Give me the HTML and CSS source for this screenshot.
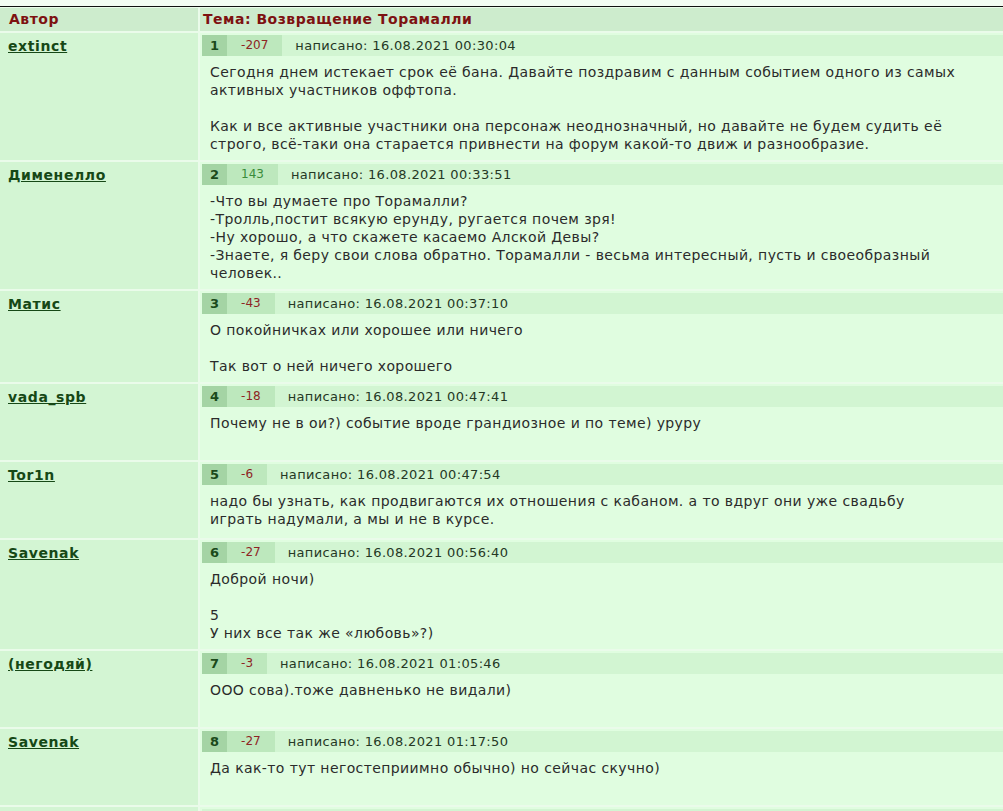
FILE: index.html
```html
<!DOCTYPE html>
<html lang="ru">
<head>
    <meta charset="UTF-8">
    <title>Возвращение Торамалли</title>
    <link rel="stylesheet" href="styles.css">
</head>
<body>
    <div class="forum">
        <div class="topic">
            <div class="cab cab-autor">Автор</div>
            <div class="cab">Тема: Возвращение Торамалли</div>

            <div class="autor"><a href="#">extinct</a></div>
            <div class="post">
                <div class="info"><span class="num">1</span><span class="voto neg">-207</span><span class="data">написано: 16.08.2021 00:30:04</span></div>
                <div class="texto">Сегодня днем истекает срок её бана. Давайте поздравим с данным событием одного из самых активных участников оффтопа.<br><br>Как и все активные участники она персонаж неоднозначный, но давайте не будем судить её строго, всё-таки она старается привнести на форум какой-то движ и разнообразие.</div>
            </div>

            <div class="autor"><a href="#">Дименелло</a></div>
            <div class="post">
                <div class="info"><span class="num">2</span><span class="voto pos">143</span><span class="data">написано: 16.08.2021 00:33:51</span></div>
                <div class="texto">-Что вы думаете про Торамалли?<br>-Тролль,постит всякую ерунду, ругается почем зря!<br>-Ну хорошо, а что скажете касаемо Алской Девы?<br>-Знаете, я беру свои слова обратно. Торамалли - весьма интересный, пусть и своеобразный человек..</div>
            </div>

            <div class="autor"><a href="#">Матис</a></div>
            <div class="post">
                <div class="info"><span class="num">3</span><span class="voto neg">-43</span><span class="data">написано: 16.08.2021 00:37:10</span></div>
                <div class="texto">О покойничках или хорошее или ничего<br><br>Так вот о ней ничего хорошего</div>
            </div>

            <div class="autor"><a href="#">vada_spb</a></div>
            <div class="post">
                <div class="info"><span class="num">4</span><span class="voto neg">-18</span><span class="data">написано: 16.08.2021 00:47:41</span></div>
                <div class="texto">Почему не в ои?) событие вроде грандиозное и по теме) уруру</div>
            </div>

            <div class="autor"><a href="#">Tor1n</a></div>
            <div class="post">
                <div class="info"><span class="num">5</span><span class="voto neg">-6</span><span class="data">написано: 16.08.2021 00:47:54</span></div>
                <div class="texto">надо бы узнать, как продвигаются их отношения с кабаном. а то вдруг они уже свадьбу играть надумали, а мы и не в курсе.</div>
            </div>

            <div class="autor"><a href="#">Savenak</a></div>
            <div class="post">
                <div class="info"><span class="num">6</span><span class="voto neg">-27</span><span class="data">написано: 16.08.2021 00:56:40</span></div>
                <div class="texto">Доброй ночи)<br><br>5<br>У них все так же «любовь»?)</div>
            </div>

            <div class="autor"><a href="#">(негодяй)</a></div>
            <div class="post">
                <div class="info"><span class="num">7</span><span class="voto neg">-3</span><span class="data">написано: 16.08.2021 01:05:46</span></div>
                <div class="texto">ООО сова).тоже давненько не видали)</div>
            </div>

            <div class="autor"><a href="#">Savenak</a></div>
            <div class="post">
                <div class="info"><span class="num">8</span><span class="voto neg">-27</span><span class="data">написано: 16.08.2021 01:17:50</span></div>
                <div class="texto">Да как-то тут негостеприимно обычно) но сейчас скучно)</div>
            </div>

            <div class="autor"></div>
            <div class="post">
                <div class="info"></div>
            </div>
        </div>
    </div>
</body>
</html>
```

FILE: styles.css
```css
body {
    margin: 0;
    background-color: #f3fcf3;
    font-family: "DejaVu Sans", Verdana, sans-serif;
    color: #2b2b2b;
}
.forum {
    margin-top: 6px;
    border-top: 1px solid #111;
    height: 804px;
    overflow: hidden;
}
.topic {
    display: grid;
    grid-template-columns: 198px 1fr;
    gap: 2px;
    padding-top: 1px;
    background-color: #eafbea;
}
.cab {
    background-color: #cdeccd;
    color: #7d1111;
    font-weight: bold;
    font-size: 14px;
    letter-spacing: 0.5px;
    line-height: 23px;
    padding-left: 3px;
}
.cab-autor {
    padding-left: 9px;
}
.autor {
    background-color: #d3f5d3;
    padding: 3px 8px;
    font-size: 14px;
    letter-spacing: 0.6px;
    line-height: 20px;
}
.autor a {
    color: #164816;
    font-weight: bold;
}
.post {
    background-color: #e0fde0;
    padding-top: 2px;
    min-height: 74px;
}
.info {
    display: flex;
    background-color: #d2f5d2;
    height: 21px;
    margin-left: 2px;
    font-size: 13px;
    line-height: 21px;
}
.num {
    background-color: #a4d4a4;
    color: #1b4a1b;
    font-weight: bold;
    padding: 0 8px;
}
.voto {
    background-color: #bde8bd;
    font-size: 12px;
    padding: 0 14px;
}
.neg {
    color: #8e2424;
}
.pos {
    color: #3a8c3a;
}
.data {
    color: #253825;
    letter-spacing: 0.35px;
    padding-left: 13px;
}
.texto {
    padding: 7px 44px 7px 10px;
    font-size: 14px;
    letter-spacing: 0.4px;
    line-height: 18px;
}
```
